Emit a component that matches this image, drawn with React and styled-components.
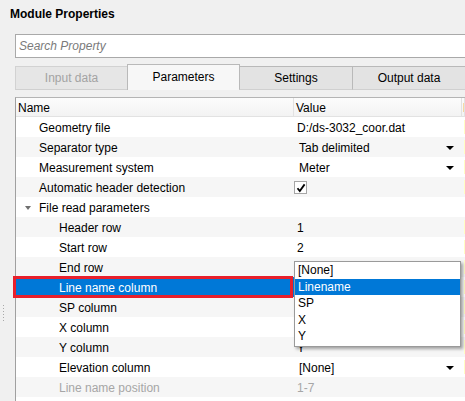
import React from 'react';
import styled, { createGlobalStyle } from 'styled-components';

const Global = createGlobalStyle`
  html, body { margin: 0; padding: 0; background: #f0f0f0; }
  body { font-family: "Liberation Sans", Arial, sans-serif; font-size: 12px; color: #000; }
  * { box-sizing: border-box; }
`;

const Panel = styled.div`
  position: relative;
  width: 465px;
  height: 401px;
  overflow: hidden;
  background: #f0f0f0;
  display: flex;
  flex-direction: column;
`;

const Title = styled.div`
  height: 28px;
  line-height: 28px;
  padding-left: 10px;
  font-weight: bold;
  font-size: 12px;
  flex: none;
`;

const Body = styled.div`
  flex: 1;
  display: flex;
  min-height: 0;
`;

const Gutter = styled.div`
  width: 15px;
  flex: none;
  padding-top: 277px;
  padding-left: 3px;
`;

const Grip = styled.div`
  width: 1px;
  height: 18px;
  background: repeating-linear-gradient(to bottom, #a8a8a8 0 1px, transparent 1px 3px);
`;

const Main = styled.div`
  flex: 1;
  display: flex;
  flex-direction: column;
  padding-top: 6px;
  min-width: 0;
`;

const Search = styled.input`
  width: 460px;
  height: 24px;
  border: 1px solid #a9a9a9;
  background: #fff;
  padding: 0 3px;
  font: inherit;
  font-size: 12px;
  outline: none;
  flex: none;
  &::placeholder { color: #7a7a7a; font-style: italic; }
`;

const Tabs = styled.div`
  margin-top: 6px;
  height: 26px;
  display: flex;
  align-items: flex-end;
  flex: none;
`;

const Tab = styled.div`
  width: ${p => p.$w}px;
  flex: none;
  height: ${p => (p.$active ? 26 : 24)}px;
  display: flex;
  align-items: center;
  justify-content: center;
  padding-bottom: ${p => (p.$active ? 1 : 0)}px;
  background: ${p => (p.$active ? '#f7f7f7' : p.$disabled ? '#e6e6e6' : '#e3e3e3')};
  border: 1px solid ${p => (p.$disabled ? '#d2d2d2' : '#b9b9b9')};
  border-bottom: ${p => (p.$active ? 'none' : '1px solid #d0d0d0')};
  margin-left: ${p => (p.$first ? 0 : -1)}px;
  color: ${p => (p.$disabled ? '#a3a3a3' : '#000')};
  font-size: 12px;
`;

const Table = styled.div`
  margin-top: 7px;
  flex: 1;
  border-left: 1px solid #a0a0a0;
  border-top: 1px solid #b4b4b4;
  background: #fff;
  display: flex;
  flex-direction: column;
  min-height: 0;
`;

const HeaderRow = styled.div`
  height: 19px;
  display: grid;
  grid-template-columns: 278px 168px 1fr;
  background: linear-gradient(#fcfcfc, #f3f3f3);
  border-bottom: 1px solid #e2e2e2;
  flex: none;
`;

const HeaderCell = styled.div`
  padding-left: ${p => p.$pad}px;
  padding-top: 1px;
  line-height: 18px;
  border-right: 1px solid #e2e2e2;
  overflow: hidden;
  white-space: nowrap;
  color: ${p => p.$color || '#000'};
`;

const Row = styled.div`
  height: 20px;
  flex: none;
  display: grid;
  grid-template-columns: 278px 168px 1fr;
  background: ${p => (p.$alt ? '#f6f6f6' : '#fff')};
`;

const NameCell = styled.div`
  display: flex;
  align-items: center;
  padding-left: ${p => p.$indent}px;
  padding-top: 1px;
  background: ${p => (p.$selected ? '#0078d7' : 'transparent')};
  color: ${p => (p.$selected ? '#fff' : p.$disabled ? '#a6a6a6' : '#000')};
  white-space: nowrap;
`;

const Expander = styled.span`
  width: 23px;
  margin-left: -23px;
  display: flex;
  justify-content: center;
  align-items: center;
`;

const ValueCell = styled.div`
  display: flex;
  align-items: center;
  padding-left: ${p => p.$pad}px;
  padding-right: 8px;
  padding-top: 1px;
  color: ${p => (p.$disabled ? '#a6a6a6' : '#000')};
  white-space: nowrap;
  overflow: hidden;
`;

const ValueText = styled.span`
  flex: 1;
`;

const Caret = styled.span`
  width: 0;
  height: 0;
  border-left: 4px solid transparent;
  border-right: 4px solid transparent;
  border-top: 4px solid #000;
`;

const ExpandCaret = styled.span`
  width: 0;
  height: 0;
  border-left: 3px solid transparent;
  border-right: 3px solid transparent;
  border-top: 4px solid #6f6f6f;
`;

const Check = styled.span`
  width: 13px;
  height: 13px;
  border: 1px solid #a6a6a6;
  background: #fff;
  display: flex;
  align-items: center;
  justify-content: center;
`;

const ExtraCell = styled.div`
  padding: 3px 0 3px 2px;
`;

const Mark = styled.div`
  height: 100%;
  background: ${p => (p.$on ? '#ffffc4' : 'transparent')};
`;

const Highlight = styled.div`
  position: absolute;
  left: 13px;
  top: 276px;
  width: 280px;
  height: 22px;
  border: 3px solid #e8202c;
  pointer-events: none;
`;

const Popup = styled.div`
  position: absolute;
  left: 294px;
  top: 261px;
  width: 167px;
  border: 1px solid #9a9a9a;
  background: #fff;
  box-shadow: 2px 2px 3px rgba(0, 0, 0, 0.35);
  padding-bottom: 1px;
`;

const Option = styled.div`
  height: 16.6px;
  line-height: 17px;
  padding-left: 3px;
  background: ${p => (p.$active ? '#0078d7' : 'transparent')};
  color: ${p => (p.$active ? '#fff' : '#000')};
`;

const rows = [
  { name: 'Geometry file', value: 'D:/ds-3032_coor.dat', indent: 23 },
  { name: 'Separator type', value: 'Tab delimited', indent: 23, combo: true },
  { name: 'Measurement system', value: 'Meter', indent: 23, combo: true },
  { name: 'Automatic header detection', check: true, indent: 23 },
  { name: 'File read parameters', indent: 23, group: true },
  { name: 'Header row', value: '1', indent: 43 },
  { name: 'Start row', value: '2', indent: 43 },
  { name: 'End row', value: '', indent: 43 },
  { name: 'Line name column', value: '', indent: 43, selected: true, combo: true },
  { name: 'SP column', value: '', indent: 43, combo: true },
  { name: 'X column', value: '', indent: 43, combo: true },
  { name: 'Y column', value: 'Y', indent: 43 },
  { name: 'Elevation column', value: '[None]', indent: 43, combo: true },
  { name: 'Line name position', value: '1-7', indent: 43, disabled: true },
];

function CheckMark() {
  return (
    <svg width="10" height="10" viewBox="0 0 10 10">
      <path d="M1.5 5.2 L3.8 8 L8.6 1.4" fill="none" stroke="#000" strokeWidth="1.8" />
    </svg>
  );
}

export default function App() {
  return (
    <>
      <Global />
      <Panel>
        <Title>Module Properties</Title>
        <Body>
          <Gutter>
            <Grip />
          </Gutter>
          <Main>
            <Search placeholder="Search Property" readOnly />
            <Tabs>
              <Tab $w={113} $first $disabled>Input data</Tab>
              <Tab $w={113} $active>Parameters</Tab>
              <Tab $w={114}>Settings</Tab>
              <Tab $w={114}>Output data</Tab>
            </Tabs>
            <Table>
              <HeaderRow>
                <HeaderCell $pad={2}>Name</HeaderCell>
                <HeaderCell $pad={2}>Value</HeaderCell>
                <HeaderCell $pad={1} $color="#5a0000">Description</HeaderCell>
              </HeaderRow>
              {rows.map((r, i) => (
                <Row key={r.name} $alt={i % 2 === 1}>
                  <NameCell $indent={r.indent} $selected={r.selected} $disabled={r.disabled}>
                    {r.group && (
                      <Expander>
                        <ExpandCaret />
                      </Expander>
                    )}
                    {r.name}
                  </NameCell>
                  <ValueCell $pad={r.combo ? 5 : r.check ? 0 : 3} $disabled={r.disabled}>
                    {r.check ? (
                      <Check>
                        <CheckMark />
                      </Check>
                    ) : (
                      <ValueText>{r.value}</ValueText>
                    )}
                    {r.combo && <Caret />}
                  </ValueCell>
                  <ExtraCell>
                    <Mark $on={!r.group && !r.disabled} />
                  </ExtraCell>
                </Row>
              ))}
            </Table>
          </Main>
        </Body>
        <Highlight />
        <Popup>
          <Option>[None]</Option>
          <Option $active>Linename</Option>
          <Option>SP</Option>
          <Option>X</Option>
          <Option>Y</Option>
        </Popup>
      </Panel>
    </>
  );
}
